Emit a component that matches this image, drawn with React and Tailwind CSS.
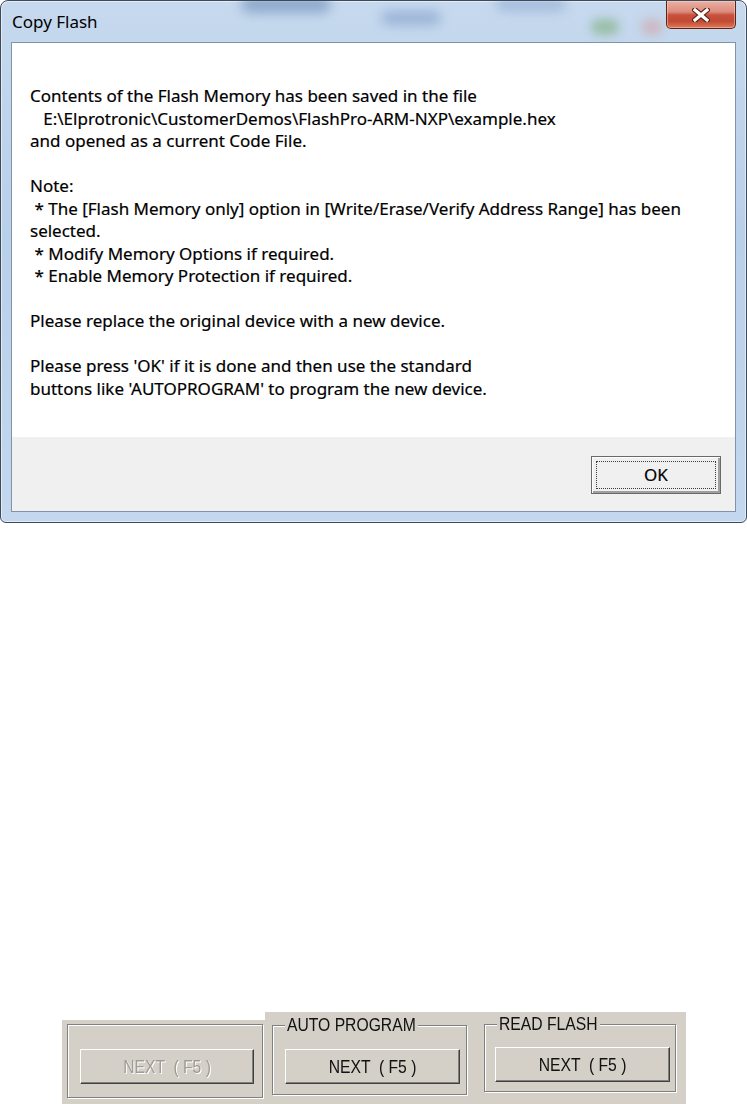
import React from "react";

const messageLines = [
  "Contents of the Flash Memory has been saved in the file",
  "   E:\\Elprotronic\\CustomerDemos\\FlashPro-ARM-NXP\\example.hex",
  "and opened as a current Code File.",
  "",
  "Note:",
  " * The [Flash Memory only] option in [Write/Erase/Verify Address Range] has been",
  "selected.",
  " * Modify Memory Options if required.",
  " * Enable Memory Protection if required.",
  "",
  "Please replace the original device with a new device.",
  "",
  "Please press 'OK' if it is done and then use the standard",
  "buttons like 'AUTOPROGRAM' to program the new device.",
];

function CloseButton() {
  return (
    <div className="w-[70px] h-[28px] rounded-b-[5px] border border-t-0 border-[#5e2219] bg-[linear-gradient(180deg,#eab0a4_0%,#dc8c7c_40%,#c9503c_52%,#c24a34_75%,#dc7a54_100%)] shadow-[inset_0_0_0_1px_rgba(255,220,210,0.45)] flex items-center justify-center">
      <svg width="18" height="14" viewBox="0 0 18 14">
        <path d="M3 2 L15 12 M15 2 L3 12" stroke="#5a1e16" strokeWidth="5.5" strokeLinecap="square" />
        <path d="M3 2 L15 12 M15 2 L3 12" stroke="#ffffff" strokeWidth="3.2" strokeLinecap="square" />
      </svg>
    </div>
  );
}

function CopyFlashDialog() {
  return (
    <div className="relative w-[747px] h-[523px] rounded-t-[8px] rounded-b-[6px] border border-[#3d4a5a] bg-[linear-gradient(180deg,#c6d9ee_0%,#b9d0e9_45%,#c3d8ee_100%)] shadow-[inset_0_0_0_1px_rgba(255,255,255,0.55)] flex flex-col px-[10px] pb-[10px] overflow-hidden">
      {/* blurred window behind the glass */}
      <div className="absolute left-[240px] top-[-6px] w-[90px] h-[18px] rounded-full bg-[#7896be] blur-[6px] opacity-70" />
      <div className="absolute left-[380px] top-[10px] w-[60px] h-[14px] rounded-full bg-[#88a4cc] blur-[6px] opacity-70" />
      <div className="absolute left-[495px] top-[-4px] w-[70px] h-[14px] rounded-full bg-[#8ca8d0] blur-[6px] opacity-60" />
      <div className="absolute left-[590px] top-[18px] w-[28px] h-[16px] rounded-full bg-[#7fae7c] blur-[5px] opacity-60" />
      <div className="absolute left-[640px] top-[18px] w-[22px] h-[16px] rounded-full bg-[#d69a9a] blur-[5px] opacity-50" />

      <div className="relative h-[41px] flex items-start justify-between">
        <span className="mt-[10px] pl-[1px] font-['Noto_Sans',sans-serif] text-[17px] leading-[22px] text-black">Copy Flash</span>
        <CloseButton />
      </div>

      <div className="relative flex-1 flex flex-col border border-[#7f93ab] bg-white">
        <div className="flex-1 pt-[42px] pl-[18px] font-['Noto_Sans',sans-serif] text-[17px] leading-[22.5px] text-black whitespace-pre [-webkit-text-stroke:0.2px_#000]">
          {messageLines.map((line, i) => (
            <div key={i} className="h-[22.5px]">{line}</div>
          ))}
        </div>
        <div className="h-[74px] bg-[#f0f0f0] flex justify-end items-start pt-[19px] pr-[14px]">
          <div className="w-[130px] h-[38px] border border-[#6a6a6a] bg-[#f0f0f0] shadow-[inset_1px_1px_0_#ffffff,inset_-2px_-2px_0_#a0a0a0] flex p-[4px]">
            <div className="flex-1 border border-dotted border-[#3a3a3a] flex items-center justify-center font-['Noto_Sans',sans-serif] text-[17px] text-black [-webkit-text-stroke:0.2px_#000]">
              OK
            </div>
          </div>
        </div>
      </div>
    </div>
  );
}

function ClassicText({ children, disabled }) {
  return (
    <span
      className={
        disabled
          ? "inline-block scale-y-[1.18] whitespace-pre font-['Liberation_Sans',Arial,sans-serif] text-[15.7px] leading-[18px] text-[#a09c95] [text-shadow:1px_1px_0_#ffffff]"
          : "inline-block scale-y-[1.18] whitespace-pre font-['Liberation_Sans',Arial,sans-serif] text-[15.7px] leading-[18px] text-[#111]"
      }
    >
      {children}
    </span>
  );
}

function ClassicButton({ disabled, className }) {
  return (
    <div
      className={
        "h-[35px] border border-t-white border-l-white border-r-[#404040] border-b-[#404040] bg-[#d4d0c8] shadow-[inset_-1px_-1px_0_#808080] flex items-center justify-center " +
        className
      }
    >
      <ClassicText disabled={disabled}>NEXT  ( F5 )</ClassicText>
    </div>
  );
}

function GroupBox({ label, className, children }) {
  return (
    <div className={"relative border border-[#808080] shadow-[inset_1px_1px_0_#ffffff,1px_1px_0_#ffffff] " + className}>
      {label && (
        <div className="absolute left-[12px] top-[-10px] px-[2px] bg-[#d4d0c8] flex">
          <ClassicText>{label}</ClassicText>
        </div>
      )}
      {children}
    </div>
  );
}

function ProgramPanel() {
  return (
    <div className="ml-[62px] flex items-end h-[92px]">
      <div className="w-[203px] h-[84px] bg-[#d4d0c8] pl-[5px] pt-[4px]">
        <GroupBox className="w-[196px] h-[74px] pl-[12px] pt-[24px]">
          <ClassicButton disabled className="w-[174px]" />
        </GroupBox>
      </div>
      <div className="w-[421px] h-[92px] bg-[#d4d0c8] flex items-start">
        <GroupBox label="AUTO PROGRAM" className="ml-[7px] mt-[13px] w-[195px] h-[70px] pl-[12px] pt-[23px]">
          <ClassicButton className="w-[175px]" />
        </GroupBox>
        <GroupBox label="READ FLASH" className="ml-[17px] mt-[12px] w-[192px] h-[68px] pl-[10px] pt-[22px]">
          <ClassicButton className="w-[175px]" />
        </GroupBox>
      </div>
    </div>
  );
}

export default function App() {
  return (
    <div className="w-[747px] h-[1104px] bg-white overflow-hidden flex flex-col">
      <CopyFlashDialog />
      <div className="h-[489px]" />
      <ProgramPanel />
    </div>
  );
}
